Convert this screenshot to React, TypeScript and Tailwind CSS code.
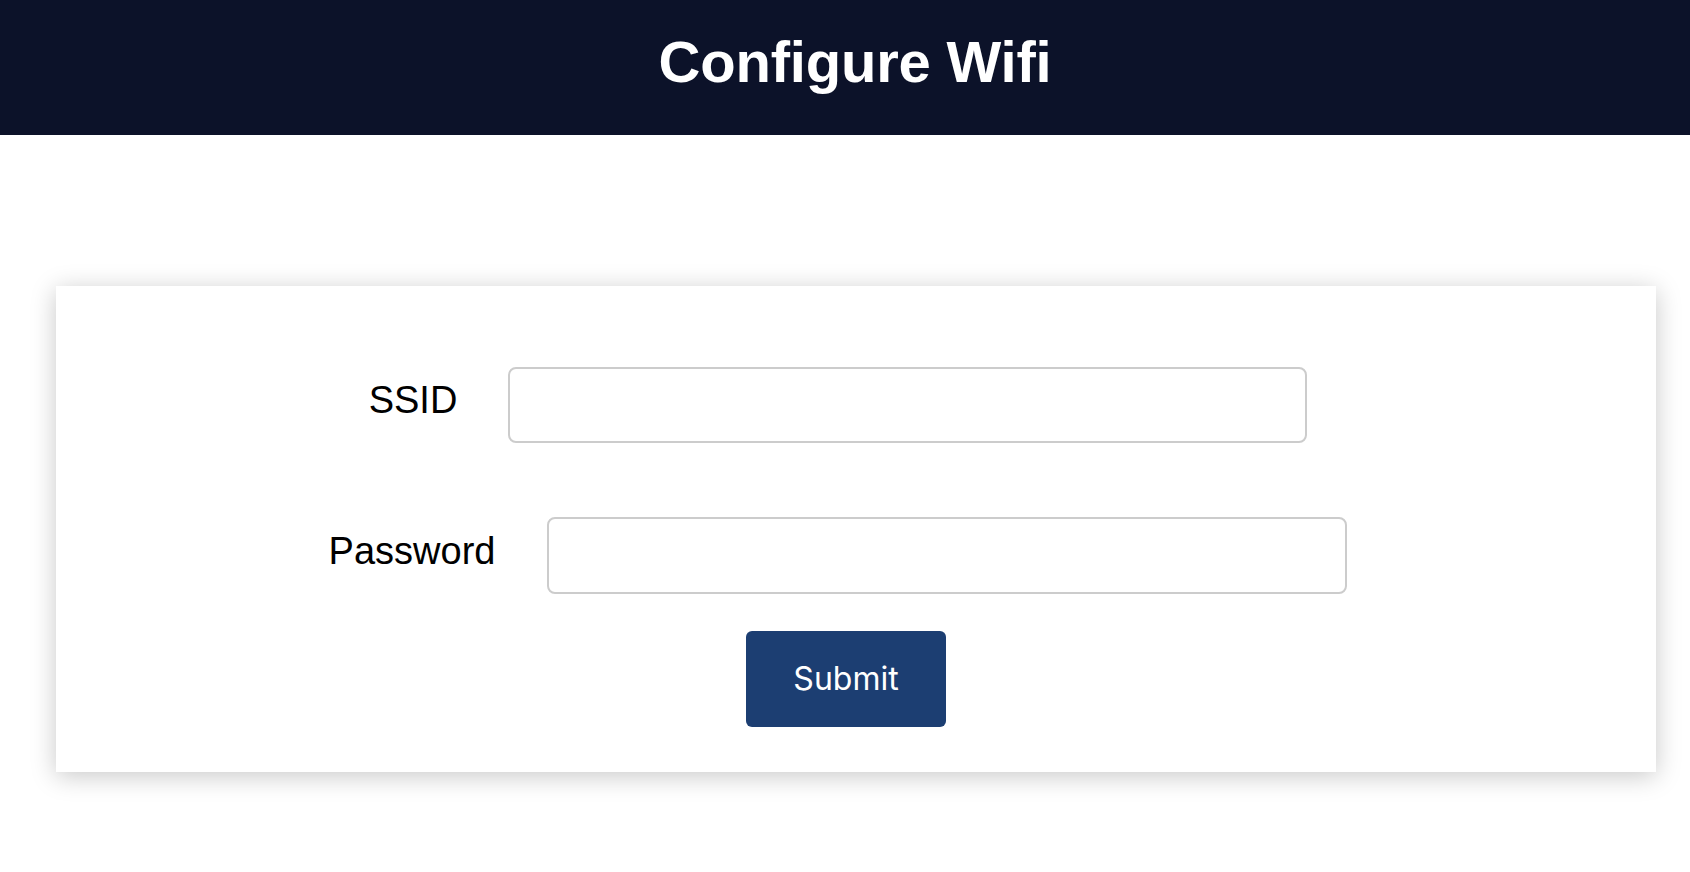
import React from 'react';

const App: React.FC = () => {
  return (
    <div className="min-h-screen bg-white font-['Liberation_Sans',Arial,sans-serif]">
      {/* ── Header ── */}
      <header className="h-[135px] bg-[#0c1229] flex items-center justify-center pb-[12px] pl-[20px]">
        <h1 className="text-white font-bold text-[58px] leading-none tracking-[-0.2px]">Configure Wifi</h1>
      </header>

      {/* ── Card ── */}
      <div className="pt-[151px] pb-[60px]">
        <form
          className="ml-[56px] w-[1600px] h-[486px] bg-white shadow-[0_4px_24px_rgba(0,0,0,0.22)] pt-[81px] flex flex-col"
          onSubmit={e => e.preventDefault()}
        >
          <div className="flex items-center justify-center gap-[51px] pr-[36px]">
            <label htmlFor="ssid" className="text-[38px] text-black leading-none mb-[10px]">SSID</label>
            <input
              id="ssid"
              type="text"
              className="w-[799px] h-[76px] border-2 border-[#cccccc] rounded-[8px] outline-none px-3 text-[30px]"
            />
          </div>

          <div className="flex items-center justify-center gap-[52px] pr-[36px] mt-[74px]">
            <label htmlFor="password" className="text-[38px] text-black leading-none mb-[10px]">Password</label>
            <input
              id="password"
              type="password"
              className="w-[800px] h-[77px] border-2 border-[#cccccc] rounded-[8px] outline-none px-3 text-[30px]"
            />
          </div>

          <div className="flex justify-center pr-[20px] mt-[37px]">
            <button
              type="submit"
              className="w-[200px] h-[96px] rounded-[6px] bg-[#1c3e72] text-white text-[32px] font-['Inter',sans-serif]"
            >
              Submit
            </button>
          </div>
        </form>
      </div>
    </div>
  );
};

export default App;
